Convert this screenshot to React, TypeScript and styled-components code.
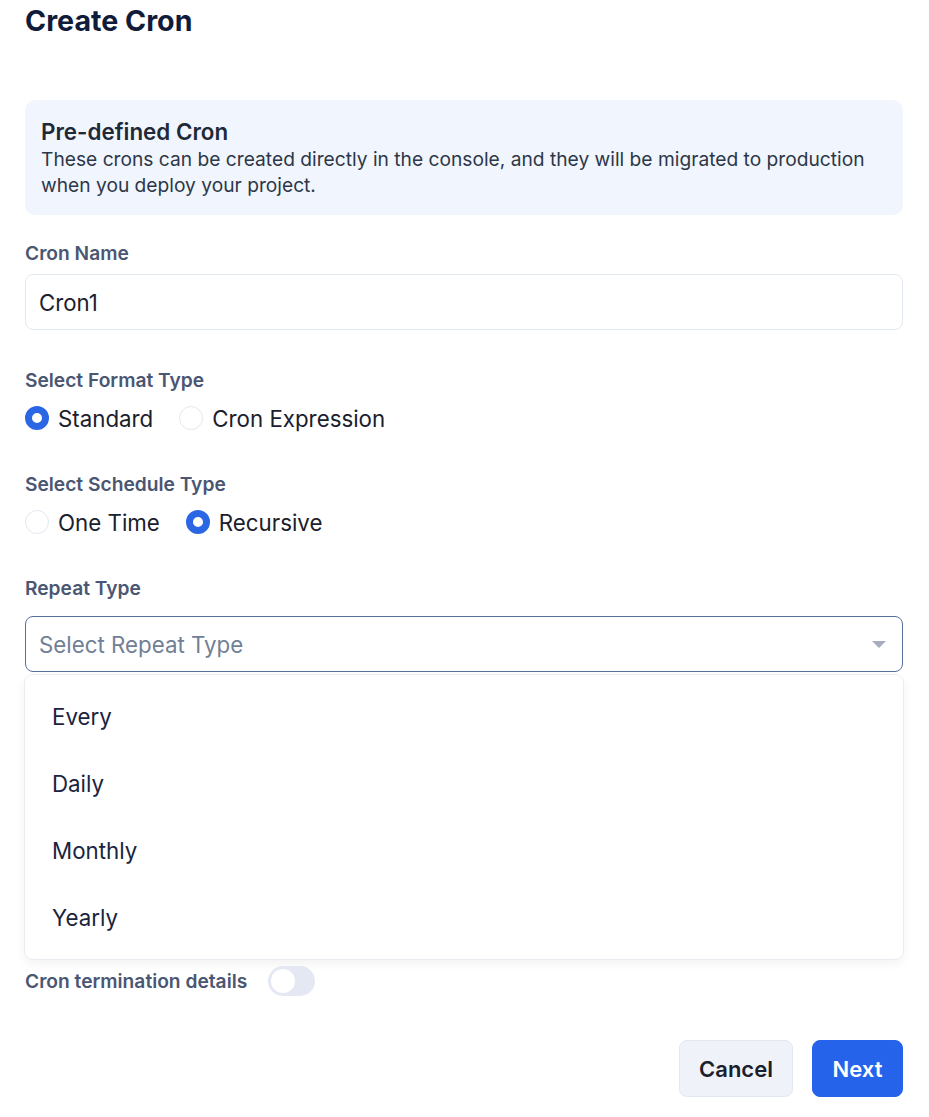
import React, { useState } from "react";
import styled, { createGlobalStyle } from "styled-components";

const GlobalStyle = createGlobalStyle`
  body {
    margin: 0;
    background: #ffffff;
    font-family: Inter, "Noto Sans", "Liberation Sans", sans-serif;
    color: #1a202c;
  }
  * {
    box-sizing: border-box;
  }
`;

const repeatOptions = ["Every", "Daily", "Monthly", "Yearly"];

type RadioOptionProps = {
  label: string;
  checked: boolean;
  onSelect: () => void;
};

const RadioOption: React.FC<RadioOptionProps> = ({ label, checked, onSelect }) => {
  return (
    <RadioLabel onClick={onSelect}>
      <RadioCircle $checked={checked} />
      <span>{label}</span>
    </RadioLabel>
  );
};

const App: React.FC = () => {
  const [name, setName] = useState<string>("Cron1");
  const [format, setFormat] = useState<string>("standard");
  const [schedule, setSchedule] = useState<string>("recursive");
  const [terminate, setTerminate] = useState<boolean>(false);

  return (
    <Page>
      <GlobalStyle />
      <Title>Create Cron</Title>

      <InfoBox>
        <InfoTitle>Pre-defined Cron</InfoTitle>
        <InfoText>
          These crons can be created directly in the console, and they will be migrated to production
          when you deploy your project.
        </InfoText>
      </InfoBox>

      <Field $top={26}>
        <Label>Cron Name</Label>
        <TextInput value={name} onChange={(e) => setName(e.target.value)} />
      </Field>

      <Field $top={38}>
        <Label>Select Format Type</Label>
        <RadioRow>
          <RadioOption
            label="Standard"
            checked={format === "standard"}
            onSelect={() => setFormat("standard")}
          />
          <RadioOption
            label="Cron Expression"
            checked={format === "expression"}
            onSelect={() => setFormat("expression")}
          />
        </RadioRow>
      </Field>

      <Field $top={39}>
        <Label>Select Schedule Type</Label>
        <RadioRow>
          <RadioOption
            label="One Time"
            checked={schedule === "once"}
            onSelect={() => setSchedule("once")}
          />
          <RadioOption
            label="Recursive"
            checked={schedule === "recursive"}
            onSelect={() => setSchedule("recursive")}
          />
        </RadioRow>
      </Field>

      <Field $top={39}>
        <Label>Repeat Type</Label>
        <SelectBox>
          <Placeholder>Select Repeat Type</Placeholder>
          <Caret />
        </SelectBox>
        <Menu>
          {repeatOptions.map((opt) => (
            <MenuItem key={opt}>{opt}</MenuItem>
          ))}
        </Menu>
      </Field>

      <ToggleRow>
        <Label>Cron termination details</Label>
        <Toggle $on={terminate} onClick={() => setTerminate(!terminate)}>
          <Knob $on={terminate} />
        </Toggle>
      </ToggleRow>

      <Footer>
        <CancelBtn>Cancel</CancelBtn>
        <NextBtn>Next</NextBtn>
      </Footer>
    </Page>
  );
};

const Page = styled.div`
  width: 929px;
  padding: 0 26px 20px 25px;
`;

const Title = styled.h1`
  margin: 4px 0 0;
  font-size: 28.6px;
  line-height: 34px;
  font-weight: 700;
  color: #111c3a;
`;

const InfoBox = styled.section`
  margin-top: 62px;
  padding: 18px 16px 17px;
  background: #f1f5fd;
  border-radius: 10px;
`;

const InfoTitle = styled.div`
  font-size: 22.4px;
  line-height: 28px;
  font-weight: 600;
  color: #1f2937;
`;

const InfoText = styled.p`
  margin: 0;
  font-size: 19.2px;
  line-height: 26px;
  color: #2d3748;
`;

const Field = styled.div<{ $top: number }>`
  display: flex;
  flex-direction: column;
  margin-top: ${(p) => p.$top}px;
`;

const Label = styled.label`
  font-size: 19.2px;
  line-height: 24px;
  font-weight: 600;
  color: #4a5672;
`;

const TextInput = styled.input`
  margin-top: 9px;
  height: 56px;
  padding: 0 13px;
  border: 1px solid #e2e8f0;
  border-radius: 8px;
  font-family: inherit;
  font-size: 22.2px;
  color: #1a202c;
  outline: none;
`;

const RadioRow = styled.div`
  display: flex;
  align-items: center;
  gap: 26px;
  margin-top: 11px;
  height: 30px;
`;

const RadioLabel = styled.div`
  display: flex;
  align-items: center;
  gap: 9px;
  font-size: 22.3px;
  color: #1a202c;
  cursor: pointer;
`;

const RadioCircle = styled.span<{ $checked: boolean }>`
  width: 24px;
  height: 24px;
  border-radius: 50%;
  background: #ffffff;
  border: ${(p) => (p.$checked ? "7px solid #2b66e4" : "1px solid #e2e8f0")};
`;

const SelectBox = styled.div`
  position: relative;
  display: flex;
  align-items: center;
  margin-top: 16px;
  height: 56px;
  padding: 0 13px;
  border: 1px solid #56709a;
  border-radius: 8px;
`;

const Placeholder = styled.span`
  font-size: 22.3px;
  color: #718096;
`;

const Caret = styled.span`
  margin-left: auto;
  margin-right: 3px;
  width: 0;
  height: 0;
  border-left: 7px solid transparent;
  border-right: 7px solid transparent;
  border-top: 7px solid #a6adbd;
`;

const Menu = styled.ul`
  list-style: none;
  margin: 3px 0 0;
  padding: 8px 0;
  background: #ffffff;
  border-radius: 8px;
  box-shadow: 0 0 0 1px rgba(226, 232, 240, 0.7), 0 4px 12px rgba(15, 23, 42, 0.06);
`;

const MenuItem = styled.li`
  display: flex;
  align-items: center;
  height: 67px;
  padding: 0 27px;
  font-size: 22.3px;
  color: #1a2440;
  cursor: pointer;
`;

const ToggleRow = styled.div`
  display: flex;
  align-items: center;
  gap: 21px;
  margin-top: 7px;
`;

const Toggle = styled.button<{ $on: boolean }>`
  position: relative;
  width: 47px;
  height: 30px;
  padding: 0;
  border: none;
  border-radius: 15px;
  background: ${(p) => (p.$on ? "#2b66e4" : "#e4e8f3")};
  cursor: pointer;
`;

const Knob = styled.span<{ $on: boolean }>`
  position: absolute;
  top: 3px;
  left: ${(p) => (p.$on ? "20px" : "3px")};
  width: 24px;
  height: 24px;
  border-radius: 50%;
  background: #ffffff;
`;

const Footer = styled.div`
  display: flex;
  justify-content: flex-end;
  gap: 19px;
  margin-top: 44px;
`;

const CancelBtn = styled.button`
  height: 57px;
  width: 114px;
  border: 1px solid #e2e8f0;
  border-radius: 8px;
  background: #eff3f9;
  font-family: inherit;
  font-size: 22px;
  font-weight: 600;
  color: #1a202c;
  cursor: pointer;
`;

const NextBtn = styled(CancelBtn)`
  width: 91px;
  border-color: #2563eb;
  background: #2563eb;
  color: #ffffff;
`;

export default App;
